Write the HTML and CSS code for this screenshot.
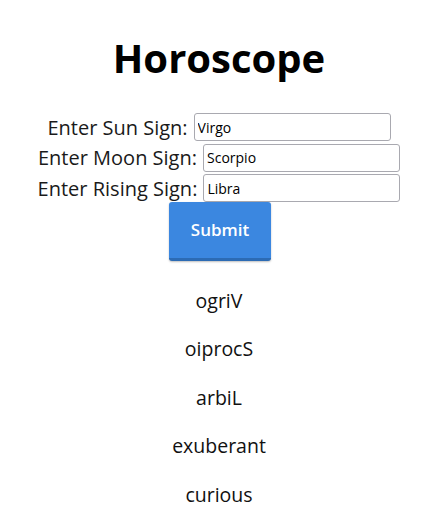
FILE: index.html
```html
<!DOCTYPE html>
<html>
<head>
<meta charset="utf-8">
<link rel="stylesheet" href="styles.css">
</head>
<body>
<h1 class="title">Horoscope</h1>
<form class="form">
  <div class="row"><label class="label">Enter Sun Sign:</label> <input class="field" type="text" value="Virgo"></div>
  <div class="row"><label class="label">Enter Moon Sign:</label> <input class="field" type="text" value="Scorpio"></div>
  <div class="row"><label class="label">Enter Rising Sign:</label> <input class="field" type="text" value="Libra"></div>
  <button class="submit" type="button">Submit</button>
</form>
<div class="results">
  <p class="result">ogriV</p>
  <p class="result">oiprocS</p>
  <p class="result">arbiL</p>
  <p class="result">exuberant</p>
  <p class="result">curious</p>
</div>
</body>
</html>
```
FILE: styles.css
```css
html, body {
  margin: 0;
  padding: 0;
  background: #fff;
}
body {
  font-family: "Open Sans", "Noto Sans", sans-serif;
  color: #111;
  text-align: center;
}
.title {
  font-size: 40px;
  font-weight: 700;
  margin: 30px 0 26px;
  line-height: 56px;
  color: #000;
}
.form {
  display: flex;
  flex-direction: column;
  align-items: center;
}
.row {
  display: flex;
  align-items: center;
  justify-content: center;
  height: 30.5px;
}
.label {
  font-size: 20px;
  margin-right: 6px;
  color: #1a1a1a;
}
.field {
  box-sizing: border-box;
  width: 197px;
  height: 28px;
  border: 1px solid #a9a9b0;
  border-radius: 3px;
  padding: 0 3px;
  font-family: "Open Sans", sans-serif;
  font-size: 14px;
  color: #000;
}
.submit {
  margin-top: -2px;
  margin-left: 2px;
  width: 102px;
  height: 59px;
  background: #3b87e0;
  color: #fff;
  border: none;
  border-bottom: 3px solid #2c6bb4;
  border-radius: 3px;
  font-family: "Open Sans", sans-serif;
  font-size: 17px;
  font-weight: 600;
  box-shadow: 0 1px 2px rgba(0,0,0,0.25);
}
.results {
  margin-top: 16px;
}
.result {
  font-size: 19.5px;
  margin: 0;
  line-height: 48.5px;
}
```
